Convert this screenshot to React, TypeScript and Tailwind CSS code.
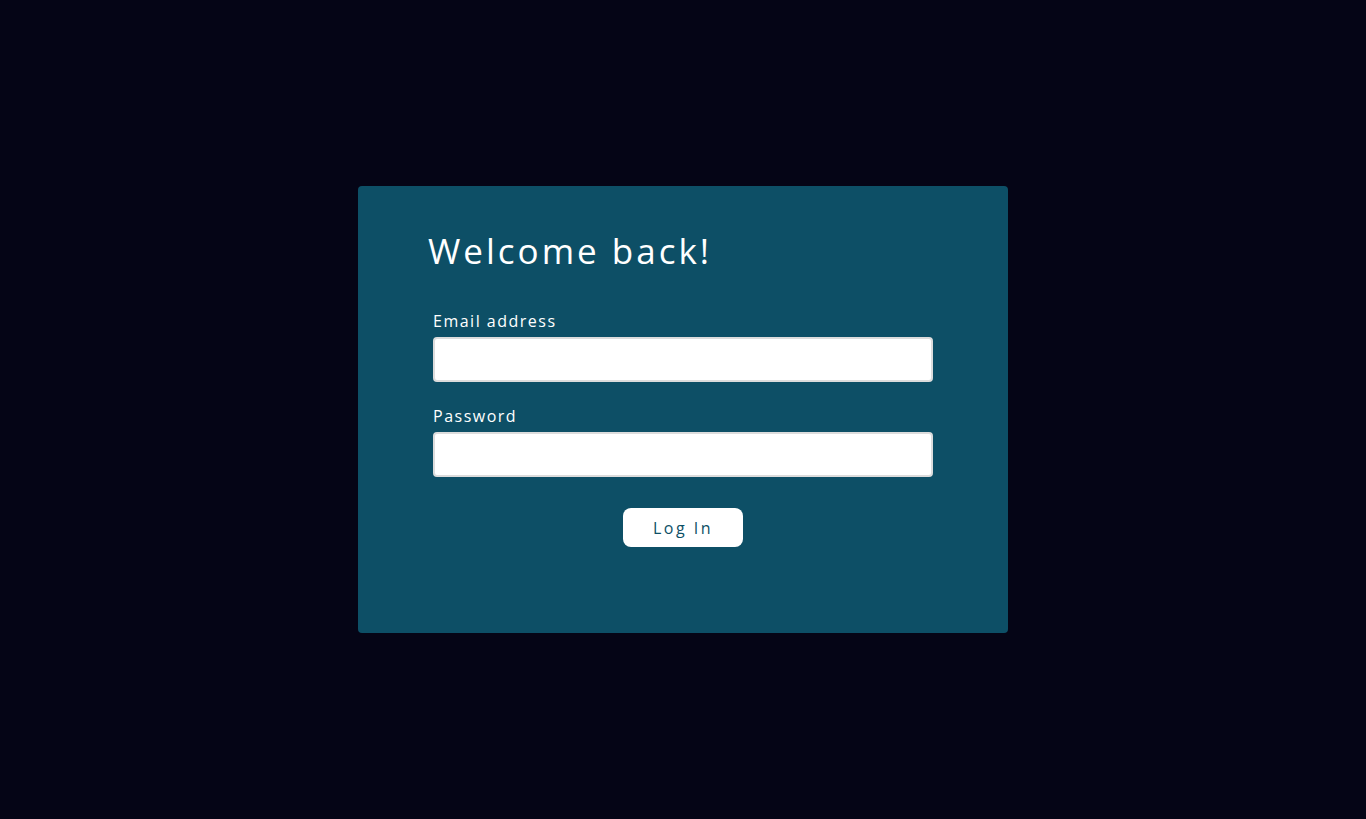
import React from 'react';

const App: React.FC = () => {
  return (
    <div
      className="min-h-[819px] w-full bg-[#050516] flex items-start justify-center pt-[186px]"
      style={{ fontFamily: '"Open Sans", "Noto Sans", sans-serif' }}
    >
      <div className="w-[650px] h-[447px] bg-[#0d4f66] rounded-[4px] pl-[70px] pr-[75px] pt-[30px]">
        <h1 className="text-[35px] leading-[70px] font-normal text-white tracking-[3px]">Welcome back!</h1>
        <form className="mt-[24px] pl-[5px] flex flex-col">
          <label className="text-[16px] leading-[22px] text-white tracking-[1.5px] mb-[5px]">Email address</label>
          <input
            type="email"
            className="w-[500px] h-[45px] bg-white rounded-[4px] border-2 border-[#dcdcdc] outline-none"
          />
          <label className="text-[16px] leading-[22px] text-white tracking-[1.5px] mt-[23px] mb-[5px]">Password</label>
          <input
            type="password"
            className="w-[500px] h-[45px] bg-white rounded-[4px] border-2 border-[#dcdcdc] outline-none"
          />
          <div className="w-[500px] flex justify-center mt-[31px]">
            <button
              type="button"
              className="w-[120px] h-[39px] bg-white rounded-[8px] text-[16px] font-medium text-[#0d4f66] tracking-[2.5px]"
            >
              Log In
            </button>
          </div>
        </form>
      </div>
    </div>
  );
};

export default App;
